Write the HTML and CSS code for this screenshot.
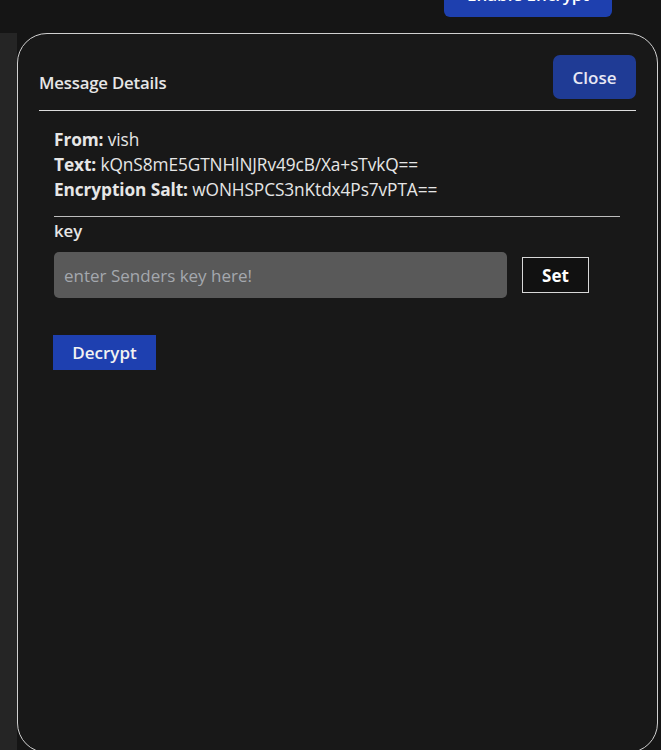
FILE: index.html
```html
<!DOCTYPE html>
<html>
<head>
<meta charset="utf-8">
<link rel="stylesheet" href="styles.css">
</head>
<body>
<header class="topbar">
  <button class="enable-btn">Enable Encrypt</button>
</header>
<div class="main">
  <aside class="side"></aside>
  <section class="modal">
    <div class="modal-head">
      <h2 class="title">Message Details</h2>
      <button class="close-btn">Close</button>
    </div>
    <div class="modal-body">
      <div class="info">
        <div><b>From:</b> vish</div>
        <div><b>Text:</b> kQnS8mE5GTNHlNJRv49cB/Xa+sTvkQ==</div>
        <div><b>Encryption Salt:</b> wONHSPCS3nKtdx4Ps7vPTA==</div>
      </div>
      <div class="key-label">key</div>
      <div class="key-row">
        <input class="key-input" type="text" placeholder="enter Senders key here!">
        <button class="set-btn">Set</button>
      </div>
      <button class="decrypt-btn">Decrypt</button>
    </div>
  </section>
</div>
</body>
</html>
```
FILE: styles.css
```css
* { box-sizing: border-box; }
html, body { margin: 0; padding: 0; }
body {
  background: #151515;
  font-family: "Open Sans", "Noto Sans", sans-serif;
  color: #e8e8e8;
  height: 750px;
  overflow: hidden;
}
.topbar {
  height: 33px;
  display: flex;
  justify-content: flex-end;
  padding-right: 49px;
}
.enable-btn {
  margin-top: -28px;
  width: 168px;
  height: 45px;
  background: #1e40af;
  color: #fff;
  border: none;
  border-radius: 6px;
  font: 600 17px "Open Sans", sans-serif;
}
.main {
  display: flex;
  height: 740px;
}
.side {
  width: 17px;
  background: #252525;
  flex: none;
}
.modal {
  width: 641px;
  height: 720px;
  background: #181818;
  border: 1px solid #d0d0d0;
  border-radius: 30px;
  padding: 21px 21px 0 21px;
}
.modal-head {
  display: flex;
  justify-content: space-between;
  align-items: center;
  border-bottom: 1px solid #dcdcdc;
  padding-bottom: 11px;
}
.title {
  margin: 0;
  padding-top: 11px;
  font-size: 16.8px;
  font-weight: 600;
  color: #e6e6e6;
  letter-spacing: -0.2px;
}
.close-btn {
  width: 83px;
  height: 44px;
  background: #1f3b95;
  color: #e8e8f4;
  border: none;
  border-radius: 7px;
  font: 600 17px "Open Sans", sans-serif;
}
.modal-body {
  padding: 16px 16px 0 15px;
}
.info {
  font-size: 17.3px;
  line-height: 25px;
  color: #e6e6e6;
  letter-spacing: -0.1px;
  border-bottom: 1px solid #bdbdbd;
  padding-bottom: 14px;
}
.info b { font-weight: 700; }
.key-label {
  font-size: 16.8px;
  font-weight: 600;
  line-height: 28px;
  color: #e6e6e6;
}
.key-row {
  display: flex;
  align-items: center;
  gap: 15px;
  margin-top: 7px;
}
.key-input {
  width: 453px;
  height: 46px;
  background: #595959;
  border: none;
  border-radius: 5px;
  padding: 0 10px;
  font: 17px "Open Sans", sans-serif;
  color: #eee;
  outline: none;
}
.key-input::placeholder { color: #a4a8ae; }
.set-btn {
  width: 67px;
  height: 36px;
  background: #111;
  border: 1px solid #d8d8d8;
  color: #fff;
  font: 700 17px "Open Sans", sans-serif;
  padding: 0;
}
.decrypt-btn {
  margin-top: 37px;
  margin-left: -1px;
  width: 103px;
  height: 35px;
  background: #1e40b0;
  color: #f2f2f2;
  border: none;
  font: 600 17px "Open Sans", sans-serif;
}
```
